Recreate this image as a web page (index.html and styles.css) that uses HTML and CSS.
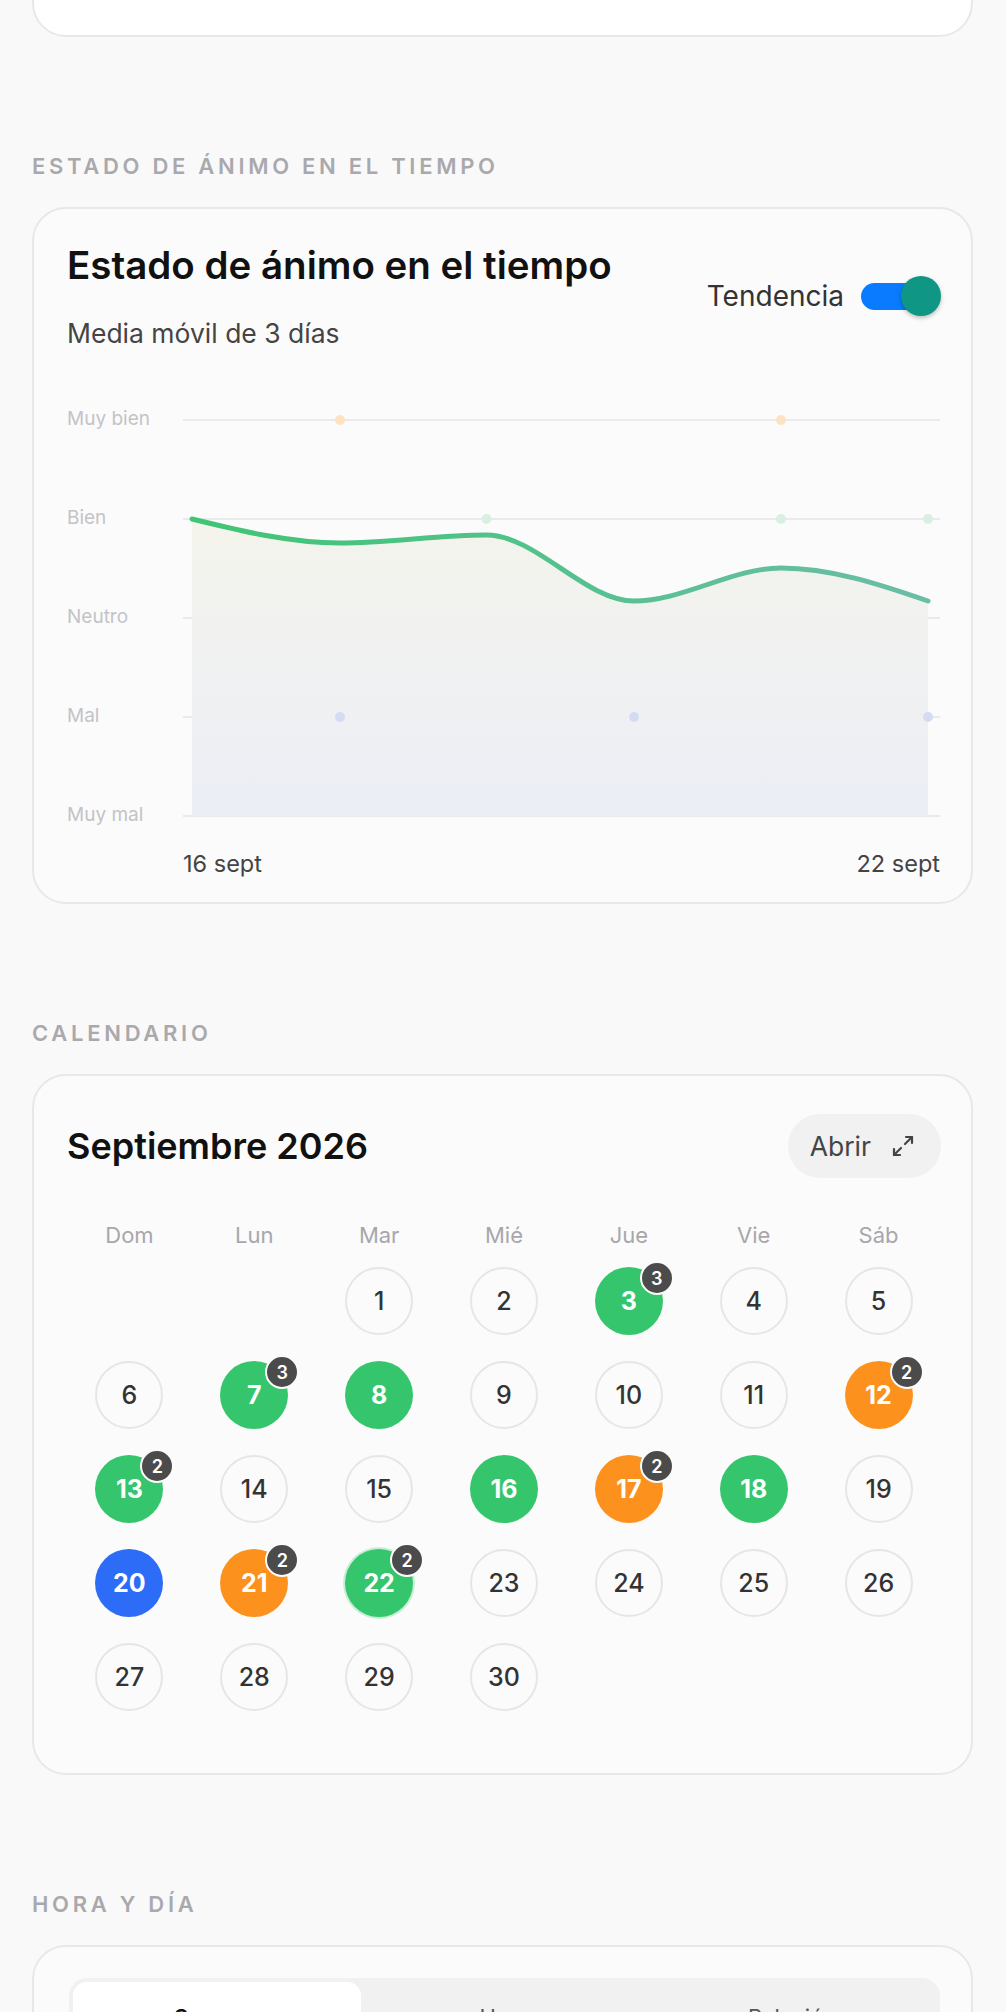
FILE: index.html
```html
<!DOCTYPE html>
<html lang="es">
<head>
    <meta charset="UTF-8">
    <meta name="viewport" content="width=device-width, initial-scale=1.0">
    <title>Estadísticas de ánimo</title>
    <link rel="stylesheet" href="styles.css">
</head>
<body>
<div class="page">
    <div class="card stub"></div>

    <section class="section">
        <h2 class="section-label">ESTADO DE ÁNIMO EN EL TIEMPO</h2>
        <div class="card chart-card">
            <div class="card-head">
                <div>
                    <h3 class="card-title chart-title">Estado de ánimo en el tiempo</h3>
                    <p class="card-sub">Media móvil de 3 días</p>
                </div>
                <div class="trend">
                    <span>Tendencia</span>
                    <span class="switch"><span class="knob"></span></span>
                </div>
            </div>
            <svg class="chart" width="874" height="495" viewBox="0 0 874 495">
                <defs>
                    <linearGradient id="areaFill" gradientUnits="userSpaceOnUse" x1="0" y1="122" x2="0" y2="419">
                        <stop offset="0" stop-color="#f4f4ec"/>
                        <stop offset="1" stop-color="#eceef6"/>
                    </linearGradient>
                    <linearGradient id="lineFill" gradientUnits="userSpaceOnUse" x1="125" y1="0" x2="861" y2="0">
                        <stop offset="0" stop-color="#3fc575"/>
                        <stop offset="1" stop-color="#6bbda6"/>
                    </linearGradient>
                </defs>
                <g class="grid">
                    <line x1="116" y1="23" x2="873" y2="23"/>
                    <line x1="116" y1="122" x2="873" y2="122"/>
                    <line x1="116" y1="221" x2="873" y2="221"/>
                    <line x1="116" y1="320" x2="873" y2="320"/>
                    <line x1="116" y1="419" x2="873" y2="419"/>
                </g>
                <g class="ylabels">
                    <text x="0" y="23">Muy bien</text>
                    <text x="0" y="122">Bien</text>
                    <text x="0" y="221">Neutro</text>
                    <text x="0" y="320">Mal</text>
                    <text x="0" y="419">Muy mal</text>
                </g>
                <path fill="url(#areaFill)" d="M125,122 C174,134 224,146 273,146 C322,146 371,138 419.5,138 C469,138 518,204 567,204 C616,204 665,171 714,171 C763,171 812,187 861,204 L861,419 L125,419 Z"/>
                <g class="dots">
                    <circle cx="273" cy="23" r="5" fill="#fde3c4"/>
                    <circle cx="714" cy="23" r="5" fill="#fde3c4"/>
                    <circle cx="419.5" cy="122" r="5" fill="#d8efe2"/>
                    <circle cx="714" cy="122" r="5" fill="#d8efe2"/>
                    <circle cx="861" cy="122" r="5" fill="#d8efe2"/>
                    <circle cx="273" cy="320" r="5" fill="#d5dcf2"/>
                    <circle cx="567" cy="320" r="5" fill="#d5dcf2"/>
                    <circle cx="861" cy="320" r="5" fill="#d5dcf2"/>
                </g>
                <path fill="none" stroke="url(#lineFill)" stroke-width="5" stroke-linecap="round" d="M125,122 C174,134 224,146 273,146 C322,146 371,138 419.5,138 C469,138 518,204 567,204 C616,204 665,171 714,171 C763,171 812,187 861,204"/>
                <g class="xlabels">
                    <text x="116" y="469">16 sept</text>
                    <text x="873" y="469" text-anchor="end">22 sept</text>
                </g>
            </svg>
        </div>
    </section>

    <section class="section">
        <h2 class="section-label">CALENDARIO</h2>
        <div class="card cal-card">
            <div class="card-head cal-head">
                <h3 class="card-title">Septiembre 2026</h3>
                <button class="open-btn">Abrir
                    <svg width="24" height="24" viewBox="0 0 24 24" fill="none" stroke="#444" stroke-width="2.2" stroke-linecap="round" stroke-linejoin="round">
                        <polyline points="15 3 21 3 21 9"/>
                        <polyline points="9 21 3 21 3 15"/>
                        <line x1="21" y1="3" x2="14" y2="10"/>
                        <line x1="3" y1="21" x2="10" y2="14"/>
                    </svg>
                </button>
            </div>
            <div class="weekdays">
                <span>Dom</span><span>Lun</span><span>Mar</span><span>Mié</span><span>Jue</span><span>Vie</span><span>Sáb</span>
            </div>
            <div class="days">
                <span class="cell"></span>
                <span class="cell"></span>
                <span class="cell"><span class="day">1</span></span>
                <span class="cell"><span class="day">2</span></span>
                <span class="cell"><span class="day good">3<span class="badge">3</span></span></span>
                <span class="cell"><span class="day">4</span></span>
                <span class="cell"><span class="day">5</span></span>

                <span class="cell"><span class="day">6</span></span>
                <span class="cell"><span class="day good">7<span class="badge">3</span></span></span>
                <span class="cell"><span class="day good">8</span></span>
                <span class="cell"><span class="day">9</span></span>
                <span class="cell"><span class="day">10</span></span>
                <span class="cell"><span class="day">11</span></span>
                <span class="cell"><span class="day great">12<span class="badge">2</span></span></span>

                <span class="cell"><span class="day good">13<span class="badge">2</span></span></span>
                <span class="cell"><span class="day">14</span></span>
                <span class="cell"><span class="day">15</span></span>
                <span class="cell"><span class="day good">16</span></span>
                <span class="cell"><span class="day great">17<span class="badge">2</span></span></span>
                <span class="cell"><span class="day good">18</span></span>
                <span class="cell"><span class="day">19</span></span>

                <span class="cell"><span class="day low">20</span></span>
                <span class="cell"><span class="day great">21<span class="badge">2</span></span></span>
                <span class="cell"><span class="day good today">22<span class="badge">2</span></span></span>
                <span class="cell"><span class="day">23</span></span>
                <span class="cell"><span class="day">24</span></span>
                <span class="cell"><span class="day">25</span></span>
                <span class="cell"><span class="day">26</span></span>

                <span class="cell"><span class="day">27</span></span>
                <span class="cell"><span class="day">28</span></span>
                <span class="cell"><span class="day">29</span></span>
                <span class="cell"><span class="day">30</span></span>
            </div>
        </div>
    </section>

    <section class="section">
        <h2 class="section-label">HORA Y DÍA</h2>
        <div class="card time-card">
            <div class="seg">
                <span class="seg-item active">Semana</span>
                <span class="seg-item">Hora</span>
                <span class="seg-item">Relación</span>
            </div>
            <div class="time-body"></div>
        </div>
    </section>
</div>
</body>
</html>
```

FILE: styles.css
```css
body {
    margin: 0;
    background-color: #f9f9f9;
    font-family: Inter, "Noto Sans", sans-serif;
    color: #111;
}
.page {
    padding: 0 33px 0 32px;
}
.card {
    background-color: #fbfbfb;
    border: 2px solid #e8e8e8;
    border-radius: 34px;
}
.stub {
    height: 118px;
    margin-top: -85px;
    background-color: #fff;
}
.section {
    margin-top: 115px;
}
.section-label {
    margin: 0 0 27px;
    font-size: 22px;
    line-height: 28px;
    font-weight: 600;
    letter-spacing: 3.7px;
    color: #a9a9ad;
}
.card-head {
    display: flex;
    justify-content: space-between;
    align-items: center;
}
.card-title {
    margin: 0;
    font-size: 36px;
    line-height: 44px;
    font-weight: 600;
    color: #111;
}
.chart-title {
    font-size: 38.5px;
}
.card-sub {
    margin: 30px 0 0;
    font-size: 26.5px;
    line-height: 32px;
    color: #444;
}
.chart-card {
    padding: 34px 30px 10px 33px;
}
.trend {
    display: flex;
    align-items: center;
    gap: 17px;
    font-size: 28px;
    color: #333;
}
.switch {
    position: relative;
    display: block;
    width: 80px;
    height: 40px;
}
.switch::before {
    content: "";
    position: absolute;
    left: 0;
    top: 7px;
    width: 70px;
    height: 27px;
    border-radius: 14px;
    background-color: #0a7bff;
}
.knob {
    position: absolute;
    right: 0;
    top: 0;
    width: 40px;
    height: 40px;
    border-radius: 50%;
    background-color: #0f9684;
    box-shadow: 0 2px 4px rgba(0, 0, 0, 0.25);
}
.chart {
    display: block;
    margin-top: 48px;
}
.grid line {
    stroke: #e4e4e8;
    stroke-width: 1.6;
}
.ylabels text {
    font-size: 19px;
    fill: #c3c3c8;
    dominant-baseline: middle;
}
.xlabels text {
    font-size: 23.5px;
    fill: #444;
    dominant-baseline: middle;
}
.cal-card {
    padding: 38px 30px 62px 33px;
}
.open-btn {
    display: flex;
    align-items: center;
    gap: 20px;
    height: 64px;
    padding: 0 26px 0 22px;
    border: none;
    border-radius: 32px;
    background-color: #f1f1f1;
    font-family: inherit;
    font-size: 26.5px;
    color: #444;
}
.weekdays {
    display: grid;
    grid-template-columns: repeat(7, 1fr);
    margin-top: 43px;
    font-size: 22px;
    line-height: 28px;
    text-align: center;
    color: #a7a7ab;
}
.days {
    display: grid;
    grid-template-columns: repeat(7, 1fr);
    row-gap: 26px;
    margin-top: 18px;
}
.cell {
    display: flex;
    justify-content: center;
    height: 68px;
}
.day {
    position: relative;
    display: flex;
    align-items: center;
    justify-content: center;
    width: 68px;
    height: 68px;
    box-sizing: border-box;
    border: 2px solid #e6e6e6;
    border-radius: 50%;
    font-size: 25px;
    font-weight: 500;
    color: #333;
}
.day.good,
.day.great,
.day.low {
    border: none;
    color: #fff;
    font-weight: 700;
}
.day.good {
    background-color: #35c56d;
}
.day.great {
    background-color: #fd911d;
}
.day.low {
    background-color: #2d6cf6;
}
.day.today {
    box-shadow: 0 0 0 2px #c9eed6;
}
.badge {
    position: absolute;
    top: -6px;
    right: -11px;
    width: 34px;
    height: 34px;
    box-sizing: border-box;
    display: flex;
    align-items: center;
    justify-content: center;
    border: 2px solid #fbfbfb;
    border-radius: 50%;
    background-color: #4b4b4b;
    font-size: 18px;
    font-weight: 600;
    color: #fff;
}
.time-card {
    padding: 31px 31px 0 35px;
}
.seg {
    display: grid;
    grid-template-columns: repeat(3, 1fr);
    padding: 4px;
    border-radius: 18px;
    background-color: #f1f1f1;
}
.seg-item {
    padding: 22px 0;
    border-radius: 14px;
    text-align: center;
    font-size: 22px;
    line-height: 26px;
    color: #555;
}
.seg-item.active {
    background-color: #fff;
    color: #111;
    font-weight: 600;
}
.time-body {
    height: 200px;
}
```
